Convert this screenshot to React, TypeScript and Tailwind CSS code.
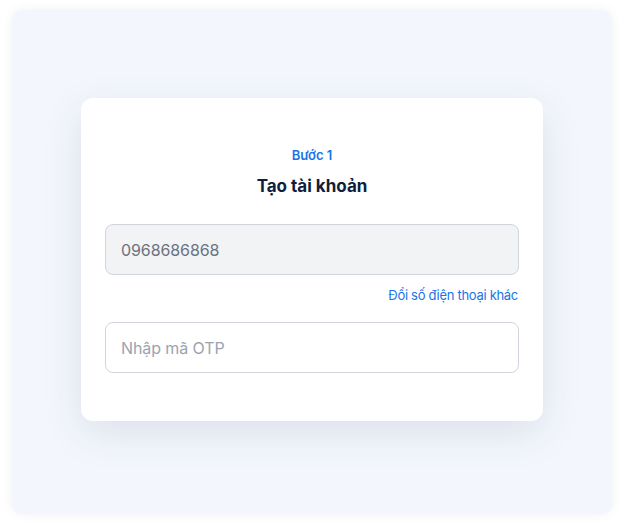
export default function App() {
  return (
    <div
      className="h-[524px] w-[624px] bg-white px-[12px] pt-[10px] pb-[10px]"
      style={{ fontFamily: 'Inter, "Noto Sans", sans-serif' }}
    >
      <div className="flex h-full items-center justify-center rounded-[10px] bg-[#f3f7fd] pb-[5px] shadow-[0_0_12px_rgba(15,30,60,0.06)]">
        <div className="w-[462px] rounded-[12px] bg-white px-6 pt-[47px] pb-[48px] shadow-[0_12px_40px_rgba(15,30,60,0.10)]">
          <div className="text-center text-[13px] leading-5 font-semibold text-[#1a73e8]">Bước 1</div>
          <h1 className="mt-[9px] text-center text-[17px] leading-6 font-bold text-[#0f1e3c]">Tạo tài khoản</h1>

          <div className="mt-[26px] flex h-[51px] items-center rounded-[8px] border border-[#d1d5db] bg-[#f1f3f5] pl-[15px] pr-4 text-[16px] tracking-[-0.1px] text-[#6b7280]">
            0968686868
          </div>

          <div className="mt-[10px] flex justify-end pr-px">
            <a className="text-[13px] leading-5 tracking-[-0.3px] text-[#1a73e8]">Đổi số điện thoại khác</a>
          </div>

          <div className="mt-[17px] flex h-[51px] items-center rounded-[8px] border border-[#d1d5db] bg-white pl-[15px] pr-4 text-[16px] tracking-[-0.1px] text-[#9ca3af]">
            Nhập mã OTP
          </div>
        </div>
      </div>
    </div>
  );
}
